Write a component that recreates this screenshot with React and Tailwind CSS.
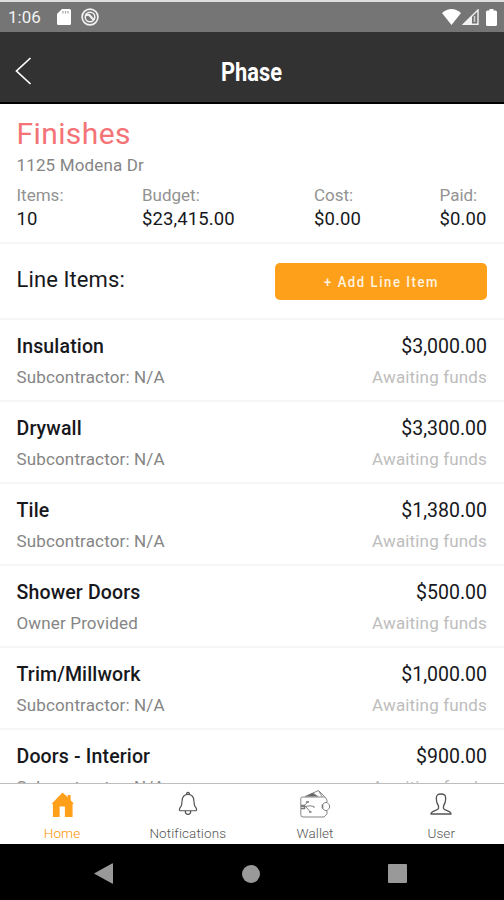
import React from "react";

const summary = [
  { label: "Items:", value: "10", width: "w-[125.5px]" },
  { label: "Budget:", value: "$23,415.00", width: "w-[172px]" },
  { label: "Cost:", value: "$0.00", width: "w-[125.5px]" },
  { label: "Paid:", value: "$0.00", width: "w-[48px]" },
];

const items = [
  { name: "Insulation", owner: "Subcontractor: N/A", amount: "$3,000.00" },
  { name: "Drywall", owner: "Subcontractor: N/A", amount: "$3,300.00" },
  { name: "Tile", owner: "Subcontractor: N/A", amount: "$1,380.00" },
  { name: "Shower Doors", owner: "Owner Provided", amount: "$500.00" },
  { name: "Trim/Millwork", owner: "Subcontractor: N/A", amount: "$1,000.00" },
  { name: "Doors - Interior", owner: "Subcontractor: N/A", amount: "$900.00" },
];

function StatusBar() {
  return (
    <div className="flex h-[32px] shrink-0 items-center justify-between border-t-2 border-[#dedede] bg-[#757575] pl-2 pr-[7px] text-[#f2f2f2]">
      <div className="flex items-center">
        <span className="w-[49px] text-[17px] leading-[20px]">1:06</span>
        <svg width="14" height="16" viewBox="0 0 14 16" fill="#fff">
          <path d="M5 0h7.5Q14 0 14 1.5v13q0 1.5-1.500 1.500h-11Q0 16 0 14.500V5Z" />
          <path d="M6 2v2.500M8.500 2v2.500M11 2v2.500" stroke="#a5a5a5" strokeWidth="1.200" />
        </svg>
        <svg className="ml-[10px]" width="18" height="18" viewBox="0 0 18 18" fill="none" stroke="#f2f2f2">
          <circle cx="9" cy="9" r="7.900" strokeWidth="1.700" />
          <circle cx="9" cy="9" r="4.800" strokeWidth="1.500" />
          <path d="M5 7.500Q8 5.500 10 9l3 3" strokeWidth="2.200" />
        </svg>
      </div>
      <div className="flex items-center">
        <svg width="19" height="16" viewBox="0 0 19 16" fill="#fff">
          <path d="M0 4Q9.500-4 19 4L9.500 16Z" />
        </svg>
        <svg className="ml-px" width="17" height="16" viewBox="0 0 17 16">
          <path d="M1.500 15.300 16 1v14.300Z" fill="none" stroke="#f2f2f2" strokeWidth="1.400" />
          <path d="M1 15.500 10 6.500v9Z" fill="#f2f2f2" />
          <path d="M12.500 7v6" stroke="#ccc" strokeWidth="1.500" />
        </svg>
        <svg className="ml-[7px]" width="11" height="17" viewBox="0 0 11 17" fill="#fff">
          <path d="M3.500 0h4v1.500H9.500Q11 1.500 11 3v12.500Q11 17 9.500 17h-8Q0 17 0 15.500V3q0-1.500 1.500-1.500h2Z" />
        </svg>
      </div>
    </div>
  );
}

function HomeIcon() {
  return (
    <svg width="23" height="25" viewBox="0 0 24 26" fill="#ff9f1a">
      <path d="M12 .5.500 12.500H2V26h7V15h5.500V26H22.500V12.500H24l-3.500-4V3h-3v2.500Z" />
    </svg>
  );
}

function BellIcon() {
  return (
    <svg width="20" height="25" viewBox="0 0 22 26" fill="none" stroke="#555" strokeWidth="1.300">
      <path d="M9.500 3V1.500q1.500-1.500 3 0V3M11 3C6.500 3 4.800 6 4.500 10L4 14.500C3.500 17 1.500 17.500 1.500 20q0 1 1.500 1h16q1.500 0 1.500-1c0-2.500-2-3-2.500-5.500L17.500 10C17.200 6 15.500 3 11 3ZM8 21.500q0 3.500 3 3.500t3-3.500" />
    </svg>
  );
}

function WalletIcon() {
  return (
    <svg width="30" height="28" viewBox="0 0 30 28" fill="none" stroke="#777" strokeWidth="0.900">
      <path d="M27 12.500V10L25 7H2.500Q.8 7 .8 8.700v16Q.8 27 3 27h21l3-3v-3.500" />
      <path d="m5 6.500 13.500-6 6 6" />
      <path d="m5.500 6.500 7-3.500 5 3.500Z" fill="#666" stroke="none" />
      <path d="m13 3 5 3.500M18.500.5 22 6.500" />
      <path d="M27 12.500h-2l-2.500 2v4l2.500 2h2l2.500-2.500V15Z" />
      <path d="M22.500 14.500v4" strokeWidth="1.600" />
      <path d="M1 16.500h5q4-1.500 8 0v1.500M4 16l3.500-4M6 17l4.500 5" />
      <path d="M1 15.500h3.500v3H1M6 12h3M9 22h2.500" strokeWidth="1.500" />
    </svg>
  );
}

function UserIcon() {
  return (
    <svg width="22" height="22" viewBox="0 0 22 22" fill="none" stroke="#555" strokeWidth="1.300">
      <path d="M11 1C7.500 1 6.300 2 6.300 5.500c0 4 .7 5.500 2.200 7.500v2.500C7.500 18 1 17.500 1 21h20c0-3.500-6.500-3-7.500-5.500V13c1.500-2 2.200-3.500 2.200-7.500C15.700 2 14.500 1 11 1Z" />
    </svg>
  );
}

const tabs = [
  { name: "Home", Icon: HomeIcon, color: "text-[#ff9200]", box: "w-[124px]", top: "pt-[8px]" },
  { name: "Notifications", Icon: BellIcon, color: "text-[#555]", box: "w-[127.5px]", top: "pt-[7px]" },
  { name: "Wallet", Icon: WalletIcon, color: "text-[#555]", box: "w-[127px]", top: "pt-[6px]" },
  { name: "User", Icon: UserIcon, color: "text-[#555]", box: "w-[125.5px]", top: "pt-[9px]" },
];

export default function App() {
  return (
    <div className="flex h-[900px] w-[504px] flex-col overflow-hidden bg-white font-['Roboto',sans-serif] text-[#17181c]">
      <StatusBar />
      <header className="grid h-[72px] shrink-0 grid-cols-3 items-center border-b-2 border-black bg-[#323232] px-[15px] pt-[7px] text-white">
        <svg width="17" height="28" viewBox="0 0 17 28" fill="none" stroke="#fff" strokeWidth="1.700">
          <path d="M15.500 1 1.500 14l14 13" />
        </svg>
        <h1 className="flex justify-center">
          <svg className="block overflow-visible" width="62" height="28">
            <text x="0" y="23.5" textLength="61" lengthAdjust="spacingAndGlyphs" className="fill-white text-[25px] font-bold">Phase</text>
          </svg>
        </h1>
      </header>

      <section className="h-[140px] shrink-0 border-b-2 border-[#f6f6f6] pl-[16.5px] pt-[12px]">
        <h2 className="text-[30px] leading-[36px] tracking-[0.4px] text-[#f47377]">Finishes</h2>
        <p className="mt-[3px] text-[17px] leading-[20px] tracking-[0.15px] text-[#858585]">1125 Modena Dr</p>
        <div className="mt-[9px] flex">
          {summary.map((s) => (
            <div key={s.label} className={"shrink-0 " + s.width}>
              <div className="text-[17px] leading-[22px] text-[#929292]">{s.label}</div>
              <div className="mt-[2px] text-[18.5px] leading-[22px] tracking-[0.1px]">{s.value}</div>
            </div>
          ))}
        </div>
      </section>

      <section className="flex h-[76px] shrink-0 items-center justify-between border-b-2 border-[#f6f6f6] pl-[16.5px] pr-[17px]">
        <h3 className="pb-[4px] text-[22px] tracking-[0.1px]">Line Items:</h3>
        <button className="flex h-[37px] w-[212px] items-center justify-center rounded-[5px] bg-[#ffa01a]">
          <svg className="block overflow-visible" width="114" height="20">
            <text x="0" y="16" textLength="115" lengthAdjust="spacingAndGlyphs" className="fill-[#fff3e0] text-[15px] font-medium tracking-[1.8px]">+ Add Line Item</text>
          </svg>
        </button>
      </section>

      <main className="min-h-0 flex-1 overflow-hidden">
        {items.map((item) => (
          <div key={item.name} className="flex h-[82px] justify-between border-b-2 border-[#f6f6f6] pl-[16.5px] pr-[17px] pt-[15px]">
            <div>
              <div className="text-[19.5px] font-medium leading-[24px] tracking-[0.15px]">{item.name}</div>
              <div className="mt-[7px] text-[17px] leading-[22px] tracking-[0.15px] text-[#858585]">{item.owner}</div>
            </div>
            <div className="text-right">
              <div className="text-[19.5px] leading-[24px]">{item.amount}</div>
              <div className="mt-[7px] text-[17px] leading-[22px] tracking-[0.15px] text-[#bdbdbd]">Awaiting funds</div>
            </div>
          </div>
        ))}
      </main>

      <nav className="flex h-[61px] shrink-0 border-t border-[#bdbdbd] bg-white">
        {tabs.map(({ name, Icon, color, box, top }) => (
          <div key={name} className={"flex shrink-0 flex-col items-center " + box + " " + color}>
            <div className={"h-[40px] " + top}><Icon /></div>
            <span className="text-[13.5px] font-light leading-[19px] tracking-[0.1px]">{name}</span>
          </div>
        ))}
      </nav>

      <footer className="flex h-[56px] shrink-0 items-center bg-black pl-[94px] pt-[3px]">
        <svg width="19" height="21" viewBox="0 0 19 21" fill="#999">
          <path d="M0 10.500 18 .5q1-.5 1 .5v19q0 1-1 .5Z" />
        </svg>
        <div className="ml-[129px] size-[18px] rounded-full bg-[#999]" />
        <div className="ml-[128px] size-[19px] rounded-[1px] bg-[#999]" />
      </footer>
    </div>
  );
}
